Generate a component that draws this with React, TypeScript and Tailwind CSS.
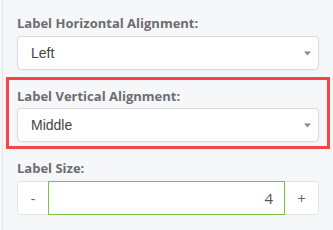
function Caret() {
  return (
    <svg width="7" height="5" viewBox="0 0 7 5" className="shrink-0">
      <path d="M0 0.5h7L3.5 4.5z" fill="#8c8c8c" />
    </svg>
  );
}

function SelectBox({ value }: { value: string }) {
  return (
    <div className="flex h-[34px] items-center justify-between rounded-[4px] border border-[#d9dadc] bg-white pl-[13px] pr-[7px] shadow-[0_1px_1px_rgba(0,0,0,0.04)]">
      <span className="font-['Liberation_Sans',sans-serif] text-[14px] text-[#444]">{value}</span>
      <Caret />
    </div>
  );
}

function Label({ children }: { children: string }) {
  return (
    <div className="font-['Open_Sans',sans-serif] text-[13px] font-bold leading-[18px] text-[#6b6d70]">
      {children}
    </div>
  );
}

export default function App() {
  return (
    <div className="h-[230px] w-[333px] overflow-hidden bg-[#f6f7f9] pl-[2px]">
      <div className="h-full border-l border-[#e4e6e9] pt-[14px]">
        <div className="px-[14px]">
          <Label>Label Horizontal Alignment:</Label>
          <div className="mt-[4px]">
            <SelectBox value="Left" />
          </div>
        </div>

        <div className="mx-[3px] mt-[7px] border-[3px] border-[#f4454b] px-[8px] pb-[4px] pt-[7px]">
          <Label>Label Vertical Alignment:</Label>
          <div className="mt-[3px]">
            <SelectBox value="Middle" />
          </div>
        </div>

        <div className="mt-[10px] px-[14px]">
          <Label>Label Size:</Label>
          <div className="mt-[4px] flex h-[34px] rounded-[4px] border border-[#e2e3e5] bg-white">
            <div className="flex w-[30px] items-center justify-center font-['Open_Sans',sans-serif] text-[14px] text-[#666]">
              -
            </div>
            <div className="-my-px flex flex-1 items-center justify-end border border-[#7cc242] pr-[11px] font-['Open_Sans',sans-serif] text-[15px] text-[#555]">
              4
            </div>
            <div className="flex w-[33px] items-center justify-center font-['Open_Sans',sans-serif] text-[15px] text-[#666]">
              +
            </div>
          </div>
        </div>
      </div>
    </div>
  );
}
